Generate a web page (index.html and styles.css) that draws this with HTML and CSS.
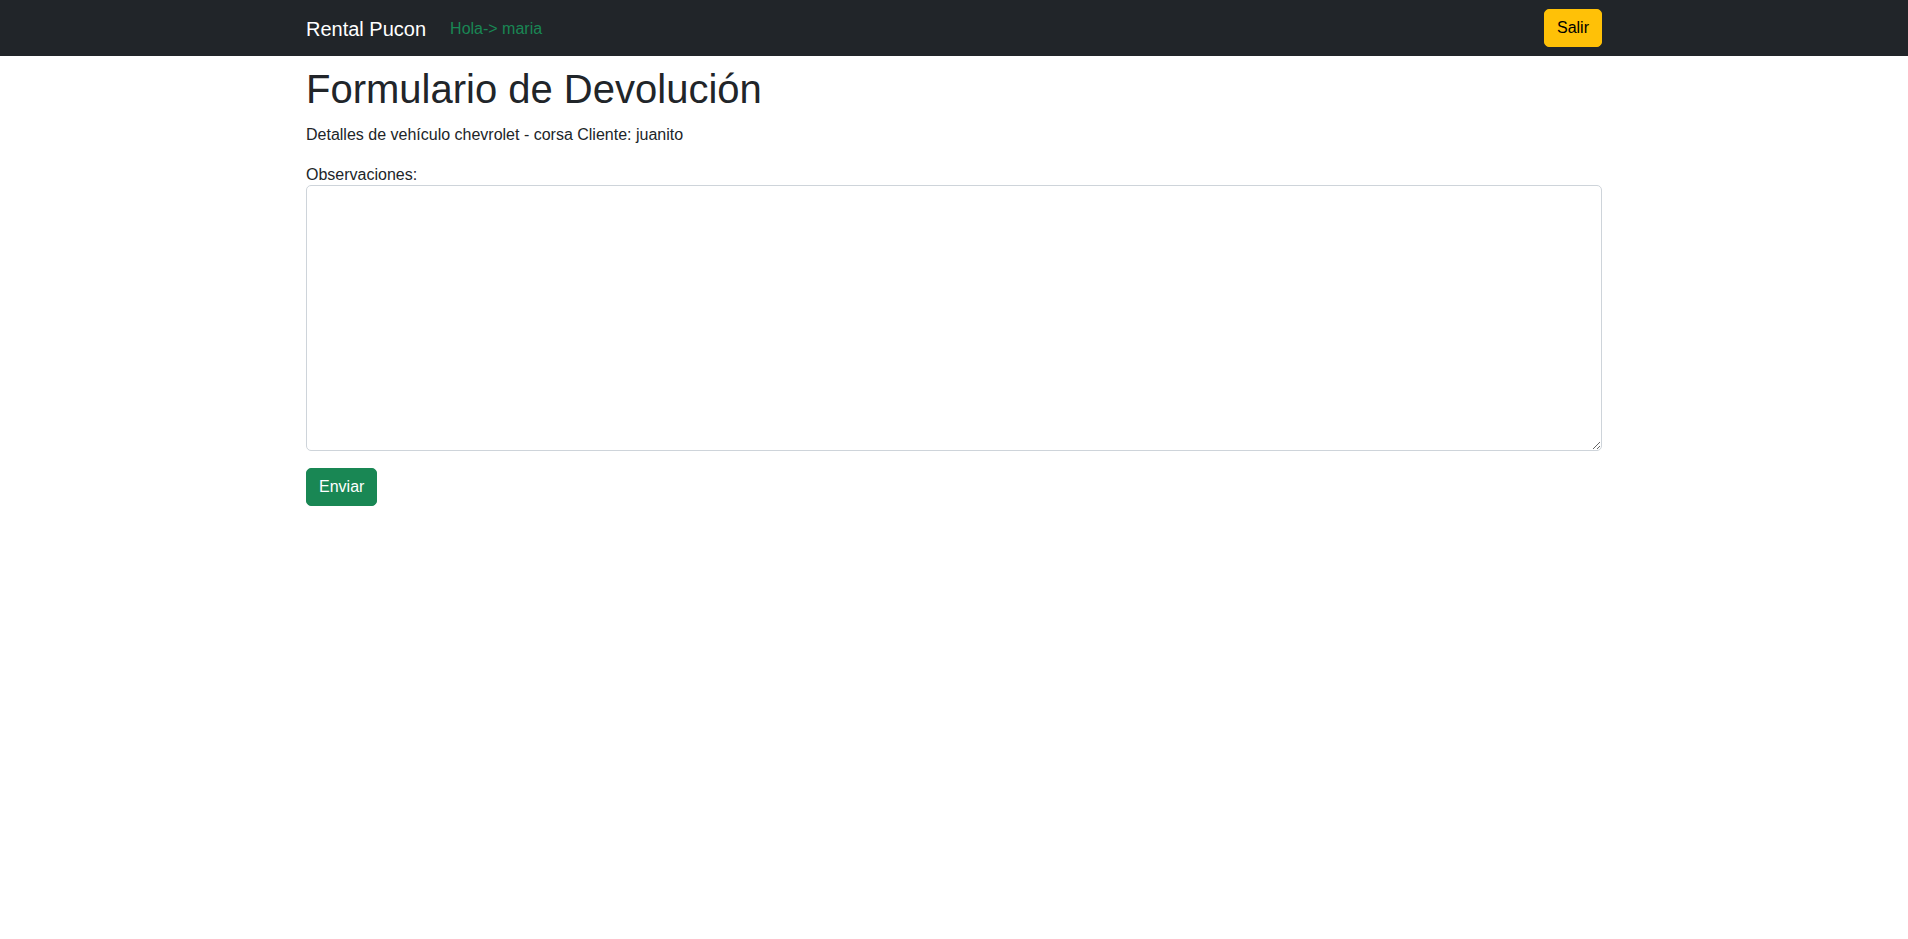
FILE: index.html
```html
<!DOCTYPE html>
<html lang="es">
<head>
<meta charset="utf-8">
<title>Rental Pucon</title>
<link rel="stylesheet" href="styles.css">
</head>
<body>
<nav class="navbar">
  <div class="container nav-inner">
    <div class="nav-left">
      <a class="brand" href="#">Rental Pucon</a>
      <span class="greeting">Hola-&gt; maria</span>
    </div>
    <a class="btn btn-warning" href="#">Salir</a>
  </div>
</nav>
<main class="container content">
  <h1 class="title">Formulario de Devolución</h1>
  <p class="details">Detalles de vehículo chevrolet - corsa Cliente: juanito</p>
  <form class="form">
    <label class="label" for="obs">Observaciones:</label>
    <textarea id="obs" class="textarea"></textarea>
    <button type="button" class="btn btn-success">Enviar</button>
  </form>
</main>
</body>
</html>
```

FILE: styles.css
```css
* { box-sizing: border-box; }
html, body { margin: 0; padding: 0; }
body {
  font-family: "Liberation Sans", Arial, sans-serif;
  font-size: 16px;
  line-height: 1.5;
  color: #212529;
  background: #fff;
}
.container {
  width: 1320px;
  margin: 0 auto;
  padding: 0 12px;
}
.navbar {
  background: #212529;
  height: 56px;
}
.nav-inner {
  height: 56px;
  display: flex;
  align-items: center;
  justify-content: space-between;
}
.nav-left {
  display: flex;
  align-items: center;
  padding-top: 1px;
}
.brand {
  color: #fff;
  font-size: 20px;
  line-height: 30px;
  text-decoration: none;
  margin-right: 16px;
}
.greeting {
  color: #198754;
  padding: 8px;
  line-height: 24px;
}
.btn {
  display: inline-block;
  font-family: inherit;
  font-size: 16px;
  line-height: 24px;
  padding: 6px 12px;
  border: 1px solid transparent;
  border-radius: 5px;
  text-decoration: none;
  cursor: pointer;
}
.btn-warning {
  background: #ffc107;
  border-color: #ffc107;
  color: #000;
}
.btn-success {
  background: #198754;
  border-color: #198754;
  color: #fff;
  margin-top: 17px;
}
.content {
  padding-top: 9px;
}
.title {
  font-size: 40px;
  font-weight: 500;
  line-height: 1.2;
  margin: 0 0 10px;
}
.details {
  margin: 0 0 16px;
}
.form {
  display: flex;
  flex-direction: column;
  align-items: flex-start;
}
.label {
  display: block;
}
.textarea {
  display: block;
  width: 100%;
  height: 266px;
  margin-top: -2px;
  padding: 6px 12px;
  font-family: inherit;
  font-size: 16px;
  line-height: 24px;
  color: #212529;
  border: 1px solid #ced4da;
  border-radius: 5px;
  resize: vertical;
}
```
